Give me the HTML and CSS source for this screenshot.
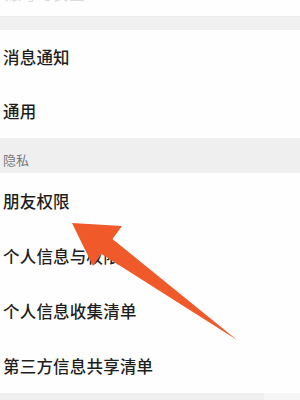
FILE: index.html
```html
<!DOCTYPE html>
<html lang="zh-CN">
<head>
<meta charset="utf-8">
<link rel="stylesheet" href="styles.css">
</head>
<body>
<div class="screen">
  <div class="cut-row"><span class="cut-text">账号与安全</span></div>
  <div class="gap-band"></div>
  <div class="group">
    <div class="row row-a">消息通知</div>
    <div class="row row-a">通用</div>
  </div>
  <div class="section-head">隐私</div>
  <div class="group">
    <div class="row row-b">朋友权限</div>
    <div class="row row-b">个人信息与权限</div>
    <div class="row row-b">个人信息收集清单</div>
    <div class="row row-b">第三方信息共享清单</div>
  </div>
  <div class="bottom-band"><div class="bottom-light"></div></div>
  <svg class="arrow" width="300" height="400" viewBox="0 0 300 400">
    <polygon points="72,223 122,226 112.5,239 237,340 101.5,254 93,266" fill="#f05a2b"/>
  </svg>
</div>
</body>
</html>
```

FILE: styles.css
```css
html, body {
  margin: 0;
  padding: 0;
  background: #fefefe;
}
.screen {
  position: relative;
  width: 300px;
  height: 400px;
  overflow: hidden;
  background: #fefefe;
  font-family: "Noto Sans CJK SC", "Noto Sans", sans-serif;
  display: flex;
  flex-direction: column;
}
.cut-row {
  height: 17px;
  overflow: hidden;
  border-bottom: 1px solid #ececec;
  box-sizing: border-box;
}
.cut-text {
  display: block;
  margin-top: -15px;
  padding-left: 5px;
  font-size: 16px;
  line-height: 17px;
  color: #dcdcdc;
}
.gap-band {
  height: 13px;
  background: #f0f0f0;
}
.group {
  display: flex;
  flex-direction: column;
  background: #fefefe;
}
.row {
  display: flex;
  align-items: center;
  padding-left: 3px;
  font-size: 16.5px;
  font-weight: 500;
  color: #1e1e1e;
  letter-spacing: 0.2px;
}
.row-a {
  height: 54px;
}
.row-b {
  height: 55px;
}
.section-head {
  height: 35px;
  box-sizing: border-box;
  padding: 14px 0 0 3px;
  background: #efefef;
  font-size: 13px;
  line-height: 16px;
  color: #7a7a7a;
}
.bottom-band {
  flex: 1;
  background: #efefef;
  display: flex;
  justify-content: flex-end;
}
.bottom-light {
  width: 36px;
  background: #f6f6f6;
}
.arrow {
  position: absolute;
  left: 0;
  top: 0;
}
```
